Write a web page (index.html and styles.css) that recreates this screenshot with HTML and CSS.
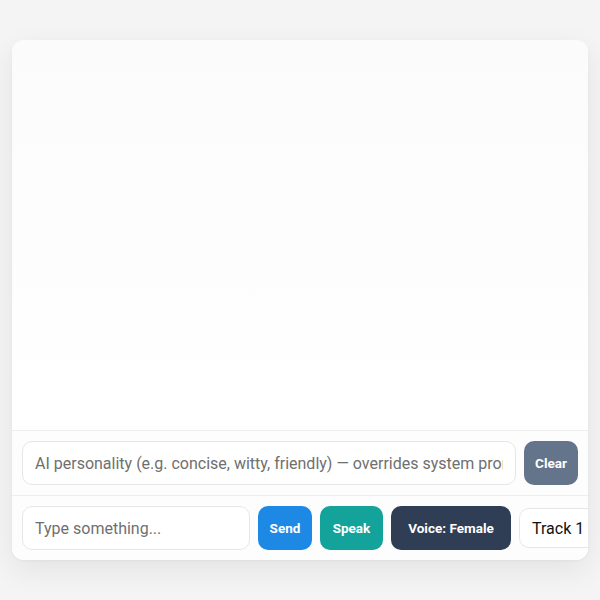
FILE: index.html
```html
<!DOCTYPE html>
<html lang="en">
<head>
<meta charset="utf-8">
<title>Chat</title>
<link rel="stylesheet" href="styles.css">
</head>
<body>
<div class="card">
  <div class="messages"></div>
  <div class="row">
    <input class="field field-grow" type="text" placeholder="AI personality (e.g. concise, witty, friendly) — overrides system prompt">
    <button class="btn btn-clear">Clear</button>
  </div>
  <div class="row">
    <input class="field field-msg" type="text" placeholder="Type something...">
    <button class="btn btn-send">Send</button>
    <button class="btn btn-speak">Speak</button>
    <button class="btn btn-voice">Voice: Female</button>
    <select class="track"><option>Track 1</option></select>
  </div>
</div>
</body>
</html>
```

FILE: styles.css
```css
* { box-sizing: border-box; }
html, body { height: 100%; }
body {
  margin: 0;
  padding: 40px 12px;
  background: #f4f4f4;
  font-family: Roboto, "Liberation Sans", sans-serif;
}
.card {
  height: 520px;
  background: #fdfdfd;
  border-radius: 12px;
  box-shadow: 0 10px 30px rgba(0,0,0,0.07), 0 1px 3px rgba(0,0,0,0.04);
  overflow: hidden;
  display: flex;
  flex-direction: column;
}
.messages {
  flex: 1;
  background: linear-gradient(#fbfbfb, #ffffff);
}
.row {
  display: flex;
  align-items: center;
  gap: 8px;
  padding: 10px;
  border-top: 1px solid #eeeeee;
  background: #fdfdfd;
}
.row:first-of-type { padding-top: 9px; }
.field {
  height: 44px;
  border: 1px solid #e6e6e6;
  border-radius: 10px;
  background: #fff;
  padding: 0 12px;
  font-family: Roboto, "Liberation Sans", sans-serif;
  font-size: 16px;
  color: #222;
  outline: none;
  min-width: 0;
}
.field::placeholder { color: #6f6f6f; }
.field-grow { flex: 1; }
.field-msg { flex: 0 0 228px; }
.btn {
  flex: 0 0 auto;
  height: 44px;
  border: none;
  border-radius: 10px;
  padding: 0;
  color: #fff;
  font-family: Roboto, "Liberation Sans", sans-serif;
  font-size: 13.5px;
  font-weight: 700;
}
.btn-clear { background: #64748b; width: 54px; }
.btn-send { background: #1e88e5; width: 54px; }
.btn-speak { background: #14a39a; width: 63px; }
.btn-voice { background: #2f3d55; width: 120px; }
.track {
  flex: 0 0 auto;
  height: 40px;
  width: 110px;
  border: 1px solid #e6e6e6;
  border-radius: 10px;
  background: #fff;
  padding: 0 12px;
  font-family: Roboto, "Liberation Sans", sans-serif;
  font-size: 16px;
  color: #111;
  appearance: none;
}
```
